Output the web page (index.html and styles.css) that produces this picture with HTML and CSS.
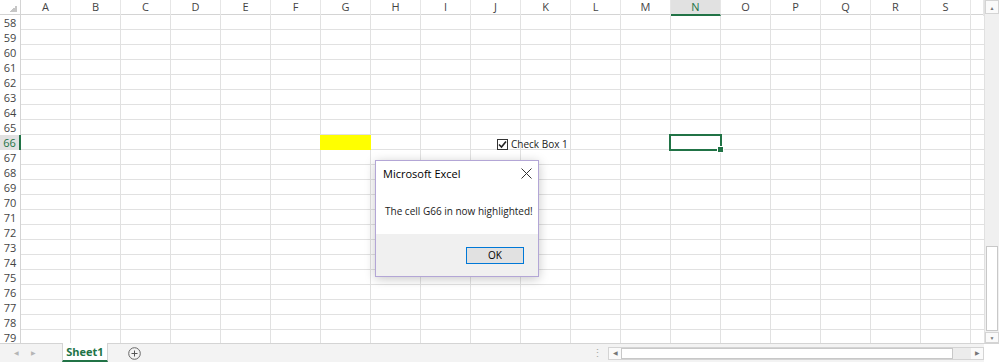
FILE: index.html
```html
<!DOCTYPE html>
<html lang="en">
<head>
    <meta charset="UTF-8">
    <title>Excel - Sheet1</title>
    <link rel="stylesheet" href="styles.css">
</head>
<body>
    <div class="app">
        <div class="main">
            <div class="sheet">
                <div class="col-header">
                    <div class="corner"></div>
                    <div>A</div><div>B</div><div>C</div><div>D</div><div>E</div>
                    <div>F</div><div>G</div><div>H</div><div>I</div><div>J</div>
                    <div>K</div><div>L</div><div>M</div><div class="active">N</div><div>O</div>
                    <div>P</div><div>Q</div><div>R</div><div>S</div><div></div>
                </div>

                <div class="row"><div class="rownum">58</div></div>
                <div class="row"><div class="rownum">59</div></div>
                <div class="row"><div class="rownum">60</div></div>
                <div class="row"><div class="rownum">61</div></div>
                <div class="row"><div class="rownum">62</div></div>
                <div class="row"><div class="rownum">63</div></div>
                <div class="row"><div class="rownum">64</div></div>
                <div class="row"><div class="rownum">65</div></div>
                <div class="row">
                    <div class="rownum active">66</div>
                    <div class="cell col-g highlight"></div>
                    <div class="cell col-n selected"></div>
                </div>
                <div class="row"><div class="rownum">67</div></div>
                <div class="row"><div class="rownum">68</div></div>
                <div class="row"><div class="rownum">69</div></div>
                <div class="row"><div class="rownum">70</div></div>
                <div class="row"><div class="rownum">71</div></div>
                <div class="row"><div class="rownum">72</div></div>
                <div class="row"><div class="rownum">73</div></div>
                <div class="row"><div class="rownum">74</div></div>
                <div class="row"><div class="rownum">75</div></div>
                <div class="row"><div class="rownum">76</div></div>
                <div class="row"><div class="rownum">77</div></div>
                <div class="row"><div class="rownum">78</div></div>
                <div class="row"><div class="rownum">79</div></div>

                <!-- form control floating over the grid -->
                <label class="check-box">
                    <span class="box">
                        <svg width="9" height="9" viewBox="0 0 9 9">
                            <path d="M1 4.5 L3.5 7 L8 1.5" fill="none" stroke="#222" stroke-width="1.6"/>
                        </svg>
                    </span>
                    Check Box 1
                </label>

                <div class="msgbox">
                    <div class="msgbox-title">
                        <span>Microsoft Excel</span>
                        <svg class="close" width="11" height="11" viewBox="0 0 11 11">
                            <path d="M0.5 0.5 L10.5 10.5 M10.5 0.5 L0.5 10.5" stroke="#333" stroke-width="1"/>
                        </svg>
                    </div>
                    <div class="msgbox-body">The cell G66 in now highlighted!</div>
                    <div class="msgbox-footer">
                        <button type="button" class="ok-button">OK</button>
                    </div>
                </div>
            </div>

            <div class="vscroll">
                <div class="vbtn up">&#9650;</div>
                <div class="vtrack"><div class="vthumb"></div></div>
                <div class="vbtn down">&#9660;</div>
            </div>
        </div>

        <div class="tabbar">
            <div class="tab-nav">
                <span>&#9664;</span>
                <span>&#9654;</span>
            </div>
            <div class="tab">Sheet1</div>
            <div class="add-sheet">
                <svg width="13" height="13" viewBox="0 0 13 13">
                    <circle cx="6.5" cy="6.5" r="5.8" fill="none" stroke="#666" stroke-width="1"/>
                    <path d="M6.5 3.5 V9.5 M3.5 6.5 H9.5" stroke="#555" stroke-width="1"/>
                </svg>
            </div>
            <div class="spacer"></div>
            <div class="split-dots">&#8942;</div>
            <div class="hscroll">
                <div class="hbtn">&#9664;</div>
                <div class="hthumb"></div>
                <div class="htrack"></div>
                <div class="hbtn">&#9654;</div>
            </div>
            <div class="tab-corner"></div>
        </div>
    </div>
</body>
</html>
```

FILE: styles.css
```css
* {
    margin: 0;
    padding: 0;
    box-sizing: border-box;
    font-family: 'Open Sans', 'Noto Sans', sans-serif;
}

body {
    width: 999px;
    height: 362px;
    overflow: hidden;
    background: #fff;
}

.app {
    width: 999px;
    height: 362px;
    display: flex;
    flex-direction: column;
}

.main {
    display: flex;
    height: 343px;
    overflow: hidden;
}

.sheet {
    flex: 1;
    position: relative;
    overflow: hidden;
}

/* column letters */
.col-header {
    display: grid;
    grid-template-columns: 21px repeat(19, 50px) 1fr;
    height: 15px;
    border-bottom: 1px solid #d4d4d4;
}

.col-header div {
    font-size: 11px;
    line-height: 14px;
    color: #444;
    text-align: center;
    border-right: 1px solid #e6e6e6;
}

.col-header .active {
    background: #e1e1e1;
    color: #217346;
    border-bottom: 2px solid #217346;
}

.col-header .corner {
    border-right: 1px solid #d4d4d4;
    background: linear-gradient(to top left, #c6c6c6 0 35%, transparent 35%) no-repeat;
    background-size: 10px 10px;
    background-position: 7px 2px;
}

/* grid rows */
.row {
    display: grid;
    grid-template-columns: 21px repeat(19, 50px) 1fr;
    height: 15px;
    border-bottom: 1px solid #e1e1e1;
    background-image: repeating-linear-gradient(to right, transparent 0 49px, #e1e1e1 49px 50px);
    background-position: 21px 0;
}

.rownum {
    grid-column: 1;
    background: #fff;
    border-right: 1px solid #d4d4d4;
    font-size: 11px;
    line-height: 15px;
    color: #444;
    text-align: center;
}

.rownum.active {
    background: #e1e1e1;
    color: #217346;
    border-right: 2px solid #217346;
}

.cell {
    position: relative;
}

.col-g { grid-column: 8; }
.col-n { grid-column: 15; }

.highlight {
    background: #ffff00;
    margin-left: -1px;
}

.selected::before {
    content: "";
    position: absolute;
    top: -1px;
    left: -2px;
    right: -1px;
    bottom: -1px;
    border: 2px solid #217346;
}

.selected::after {
    content: "";
    position: absolute;
    right: -3px;
    bottom: -3px;
    width: 5px;
    height: 5px;
    background: #217346;
    border: 1px solid #fff;
}

/* check box control */
.check-box {
    position: absolute;
    left: 497px;
    top: 137px;
    display: flex;
    align-items: center;
    gap: 3px;
    font-size: 10px;
    color: #222;
}

.check-box .box {
    width: 11px;
    height: 11px;
    border: 1px solid #333;
    background: #fff;
    display: flex;
    align-items: center;
    justify-content: center;
}

/* message box */
.msgbox {
    position: absolute;
    left: 375px;
    top: 160px;
    width: 164px;
    height: 117px;
    background: #fff;
    border: 1px solid #b3a6d6;
    box-shadow: 0 2px 10px rgba(0, 0, 0, 0.22);
    display: flex;
    flex-direction: column;
}

.msgbox-title {
    height: 25px;
    padding: 0 6px 0 7px;
    display: flex;
    align-items: center;
    justify-content: space-between;
    font-size: 11px;
    color: #000;
}

.msgbox-body {
    flex: 1;
    padding: 18px 0 0 9px;
    font-size: 10px;
    color: #222;
}

.msgbox-footer {
    height: 42px;
    background: #f0f0f0;
    display: flex;
    justify-content: flex-end;
    align-items: center;
    padding-right: 14px;
}

.ok-button {
    width: 58px;
    height: 17px;
    border: 1px solid #0078d7;
    background: #e1e1e1;
    font-size: 10px;
    color: #000;
}

/* vertical scrollbar */
.vscroll {
    width: 15px;
    background: #f0f0f0;
    border-left: 1px solid #e1e1e1;
    display: flex;
    flex-direction: column;
}

.vbtn {
    height: 14px;
    font-size: 5px;
    color: #777;
    text-align: center;
    line-height: 14px;
    border: 1px solid #d4d4d4;
    background: #fafafa;
}

.vbtn.down {
    height: 11px;
    line-height: 10px;
}

.vtrack {
    flex: 1;
    display: flex;
    flex-direction: column;
    justify-content: flex-end;
    padding: 0 1px 1px;
}

.vthumb {
    height: 85px;
    background: #fff;
    border: 1px solid #c8c8c8;
}

/* sheet tabs */
.tabbar {
    height: 19px;
    display: flex;
    align-items: stretch;
    background: #f3f3f3;
    border-top: 1px solid #d4d4d4;
}

.tab-nav {
    width: 62px;
    display: flex;
    gap: 12px;
    padding-left: 14px;
    align-items: center;
    font-size: 6px;
    color: #b5b5b5;
}

.tab {
    width: 46px;
    background: #fff;
    margin-top: -1px;
    border-left: 1px solid #d4d4d4;
    border-right: 1px solid #d4d4d4;
    border-bottom: 2px solid #217346;
    text-align: center;
    font-size: 11px;
    font-weight: 700;
    line-height: 17px;
    color: #217346;
}

.add-sheet {
    width: 52px;
    display: flex;
    align-items: center;
    justify-content: center;
}

.spacer {
    flex: 1;
}

.split-dots {
    width: 14px;
    font-size: 11px;
    line-height: 18px;
    color: #aaa;
    text-align: center;
    margin-right: 4px;
}

.hscroll {
    width: 376px;
    margin: 3px 0 2px;
    display: flex;
    border: 1px solid #d4d4d4;
    background: #ececec;
}

.hbtn {
    width: 12px;
    font-size: 6px;
    line-height: 11px;
    text-align: center;
    color: #777;
    background: #fafafa;
}

.hthumb {
    width: 332px;
    background: #fff;
    border: 1px solid #c8c8c8;
}

.htrack {
    flex: 1;
}

.tab-corner {
    width: 15px;
    background: #fff;
}
```
